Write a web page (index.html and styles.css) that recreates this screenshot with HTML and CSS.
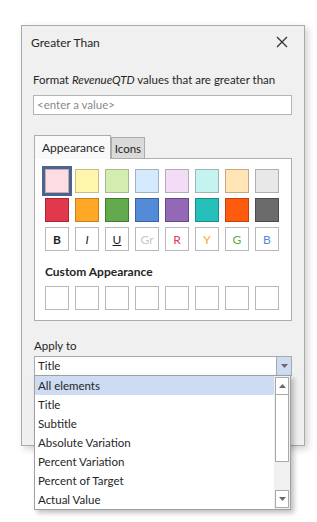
FILE: index.html
```html
<!DOCTYPE html>
<html>
<head>
<meta charset="utf-8">
<link rel="stylesheet" href="styles.css">
</head>
<body>
<div class="dialog">
  <div class="titlebar">
    <span class="title">Greater Than</span>
    <svg class="close" width="12" height="12" viewBox="0 0 12 12"><path d="M1 1L11 11M11 1L1 11" stroke="#333" stroke-width="1.3" fill="none"/></svg>
  </div>
  <div class="content">
    <div class="format-label">Format <i>RevenueQTD</i> values that are greater than</div>
    <div class="input">&lt;enter a value&gt;</div>
    <div class="tabs">
      <div class="tab active">Appearance</div>
      <div class="tab">Icons</div>
    </div>
    <div class="pane">
      <div class="grid">
        <div class="sw selected" style="--c:#fddde1;--b:#c9a9ad"></div>
        <div class="sw" style="--c:#fff5ab;--b:#c7bf85"></div>
        <div class="sw" style="--c:#d3edb1;--b:#a9b991"></div>
        <div class="sw" style="--c:#d6eafd;--b:#a3b2c1"></div>
        <div class="sw" style="--c:#f3dcf6;--b:#b9a9bb"></div>
        <div class="sw" style="--c:#c5f3ef;--b:#98b9b6"></div>
        <div class="sw" style="--c:#ffe4b6;--b:#c2a982"></div>
        <div class="sw" style="--c:#e8e8e8;--b:#b0b0b0"></div>

        <div class="sw" style="--c:#e1384b;--b:#a8283a"></div>
        <div class="sw" style="--c:#ffa726;--b:#c6801a"></div>
        <div class="sw" style="--c:#63a94d;--b:#3f7b31"></div>
        <div class="sw" style="--c:#548bd9;--b:#3a64a1"></div>
        <div class="sw" style="--c:#9368b7;--b:#6a4890"></div>
        <div class="sw" style="--c:#26bfb9;--b:#17918b"></div>
        <div class="sw" style="--c:#ff5b0f;--b:#c24309"></div>
        <div class="sw" style="--c:#6b6b6b;--b:#4b4b4b"></div>

        <div class="sw txt b">B</div>
        <div class="sw txt i">I</div>
        <div class="sw txt u">U</div>
        <div class="sw txt gr">Gr</div>
        <div class="sw txt r">R</div>
        <div class="sw txt y">Y</div>
        <div class="sw txt g">G</div>
        <div class="sw txt bl">B</div>
      </div>
      <div class="custom-label">Custom Appearance</div>
      <div class="grid custom">
        <div class="sw empty"></div>
        <div class="sw empty"></div>
        <div class="sw empty"></div>
        <div class="sw empty"></div>
        <div class="sw empty"></div>
        <div class="sw empty"></div>
        <div class="sw empty"></div>
        <div class="sw empty"></div>
      </div>
    </div>
    <div class="apply-label">Apply to</div>
    <div class="combo-wrap">
      <div class="combo">
        <span class="combo-text">Title</span>
        <span class="combo-btn"><svg width="7" height="4" viewBox="0 0 7 4"><path d="M0 0H7L3.5 4Z" fill="#6a6a6a"/></svg></span>
      </div>
      <div class="popup">
        <div class="items">
          <div class="item sel">All elements</div>
          <div class="item">Title</div>
          <div class="item">Subtitle</div>
          <div class="item">Absolute Variation</div>
          <div class="item">Percent Variation</div>
          <div class="item">Percent of Target</div>
          <div class="item">Actual Value</div>
        </div>
        <div class="scroll">
          <div class="sbtn"><svg width="7" height="4" viewBox="0 0 7 4"><path d="M0 4H7L3.5 0Z" fill="#6a6a6a"/></svg></div>
          <div class="thumb"></div>
          <div class="track"></div>
          <div class="sbtn"><svg width="7" height="4" viewBox="0 0 7 4"><path d="M0 0H7L3.5 4Z" fill="#6a6a6a"/></svg></div>
        </div>
      </div>
    </div>
  </div>
</div>
</body>
</html>
```
FILE: styles.css
```css
html, body {
  margin: 0;
  padding: 0;
  background: #ffffff;
}
html {
  height: 100%;
}
body {
  min-height: 522px;
  font-family: "Lato", "Open Sans", sans-serif;
  font-size: 11.5px;
  color: #262626;
}
.dialog {
  box-sizing: border-box;
  margin: 0 0 0 21px;
  position: relative;
  top: 25px;
  width: 284px;
  height: 421px;
  background: #f0f0f0;
  border: 1px solid #a9a9a9;
  box-shadow: 3px 3px 7px rgba(0, 0, 0, 0.18);
}
.titlebar {
  height: 32px;
  display: flex;
  align-items: center;
  justify-content: space-between;
  padding: 0 16px 0 9px;
}
.title {
  font-size: 12px;
}
.close {
  display: block;
}
.content {
  padding: 0 11px 0 11px;
}
.format-label {
  margin-top: 14px;
  line-height: 16px;
  white-space: nowrap;
}
.input {
  box-sizing: border-box;
  margin-top: 7px;
  width: 259px;
  height: 20px;
  border: 1px solid #b4b4b4;
  background: #fff;
  color: #8a8a8a;
  line-height: 18px;
  padding-left: 3px;
}
.tabs {
  display: flex;
  align-items: flex-end;
  margin-top: 20px;
  margin-left: 1px;
  height: 23px;
  position: relative;
  z-index: 1;
}
.tab {
  box-sizing: border-box;
  height: 21px;
  border: 1px solid #adadad;
  border-bottom: none;
  background: #dadada;
  padding: 0 3px;
  line-height: 21px;
}
.tab.active {
  height: 24px;
  margin-bottom: -1px;
  background: #f9f9f9;
  padding: 0 5px 0 7px;
  line-height: 23px;
  font-size: 12px;
}
.pane {
  box-sizing: border-box;
  margin-left: 1px;
  width: 258px;
  height: 163px;
  background: #fff;
  border: 1px solid #adadad;
  padding: 10px 0 0 10px;
}
.grid {
  display: grid;
  grid-template-columns: repeat(8, 24px);
  grid-auto-rows: 24px;
  column-gap: 6px;
  row-gap: 5px;
}
.sw {
  box-sizing: border-box;
  background: var(--c);
  border: 1px solid var(--b);
  position: relative;
}
.sw.selected {
  outline: 3px solid #4a6592;
  outline-offset: 0px;
}
.sw.selected::after {
  content: "";
  position: absolute;
  inset: -4px;
  border: 1px solid #4a6592;
}
.sw.txt, .sw.empty {
  background: #fff;
  border: 1px solid #b9b9b9;
}
.sw.txt {
  display: flex;
  align-items: center;
  justify-content: center;
  font-size: 12px;
}
.sw.b { font-weight: bold; color: #1e1e1e; }
.sw.i { font-style: italic; color: #1e1e1e; }
.sw.u { text-decoration: underline; color: #1e1e1e; }
.sw.gr { color: #c8c8c8; }
.sw.r { color: #e1384b; }
.sw.y { color: #ffa726; }
.sw.g { color: #63a94d; }
.sw.bl { color: #548bd9; }
.custom-label {
  margin-top: 13px;
  line-height: 16px;
  font-weight: bold;
  font-size: 12px;
}
.grid.custom {
  margin-top: 6px;
}
.apply-label {
  margin-top: 17px;
  margin-left: 1px;
  line-height: 16px;
}
.combo-wrap {
  position: relative;
  margin-top: 2px;
  margin-left: 1px;
}
.combo {
  box-sizing: border-box;
  width: 258px;
  height: 20px;
  background: #fff;
  border: 1px solid #a9a9a9;
  display: flex;
  align-items: stretch;
}
.combo-text {
  flex: 1;
  padding-left: 3px;
  line-height: 18px;
}
.combo-btn {
  width: 14px;
  background: #cddcf2;
  border-left: 1px solid #a9a9a9;
  display: flex;
  align-items: center;
  justify-content: center;
}
.popup {
  position: absolute;
  top: 19px;
  left: 0;
  box-sizing: border-box;
  width: 257px;
  height: 135px;
  background: #fff;
  border: 1px solid #a0a0a0;
  box-shadow: 3px 3px 5px rgba(0, 0, 0, 0.25);
  display: flex;
  z-index: 2;
}
.items {
  flex: 1;
}
.item {
  height: 19px;
  line-height: 19px;
  padding-left: 3px;
}
.item.sel {
  background: #cddcf2;
}
.scroll {
  width: 16px;
  background: #f0f0f0;
  display: flex;
  flex-direction: column;
  padding: 1px;
  box-sizing: border-box;
}
.sbtn {
  box-sizing: border-box;
  height: 18px;
  background: #fff;
  border: 1px solid #a9a9a9;
  display: flex;
  align-items: center;
  justify-content: center;
}
.thumb {
  box-sizing: border-box;
  height: 67px;
  background: #fff;
  border: 1px solid #a9a9a9;
  border-top: none;
}
.track {
  flex: 1;
}
```
